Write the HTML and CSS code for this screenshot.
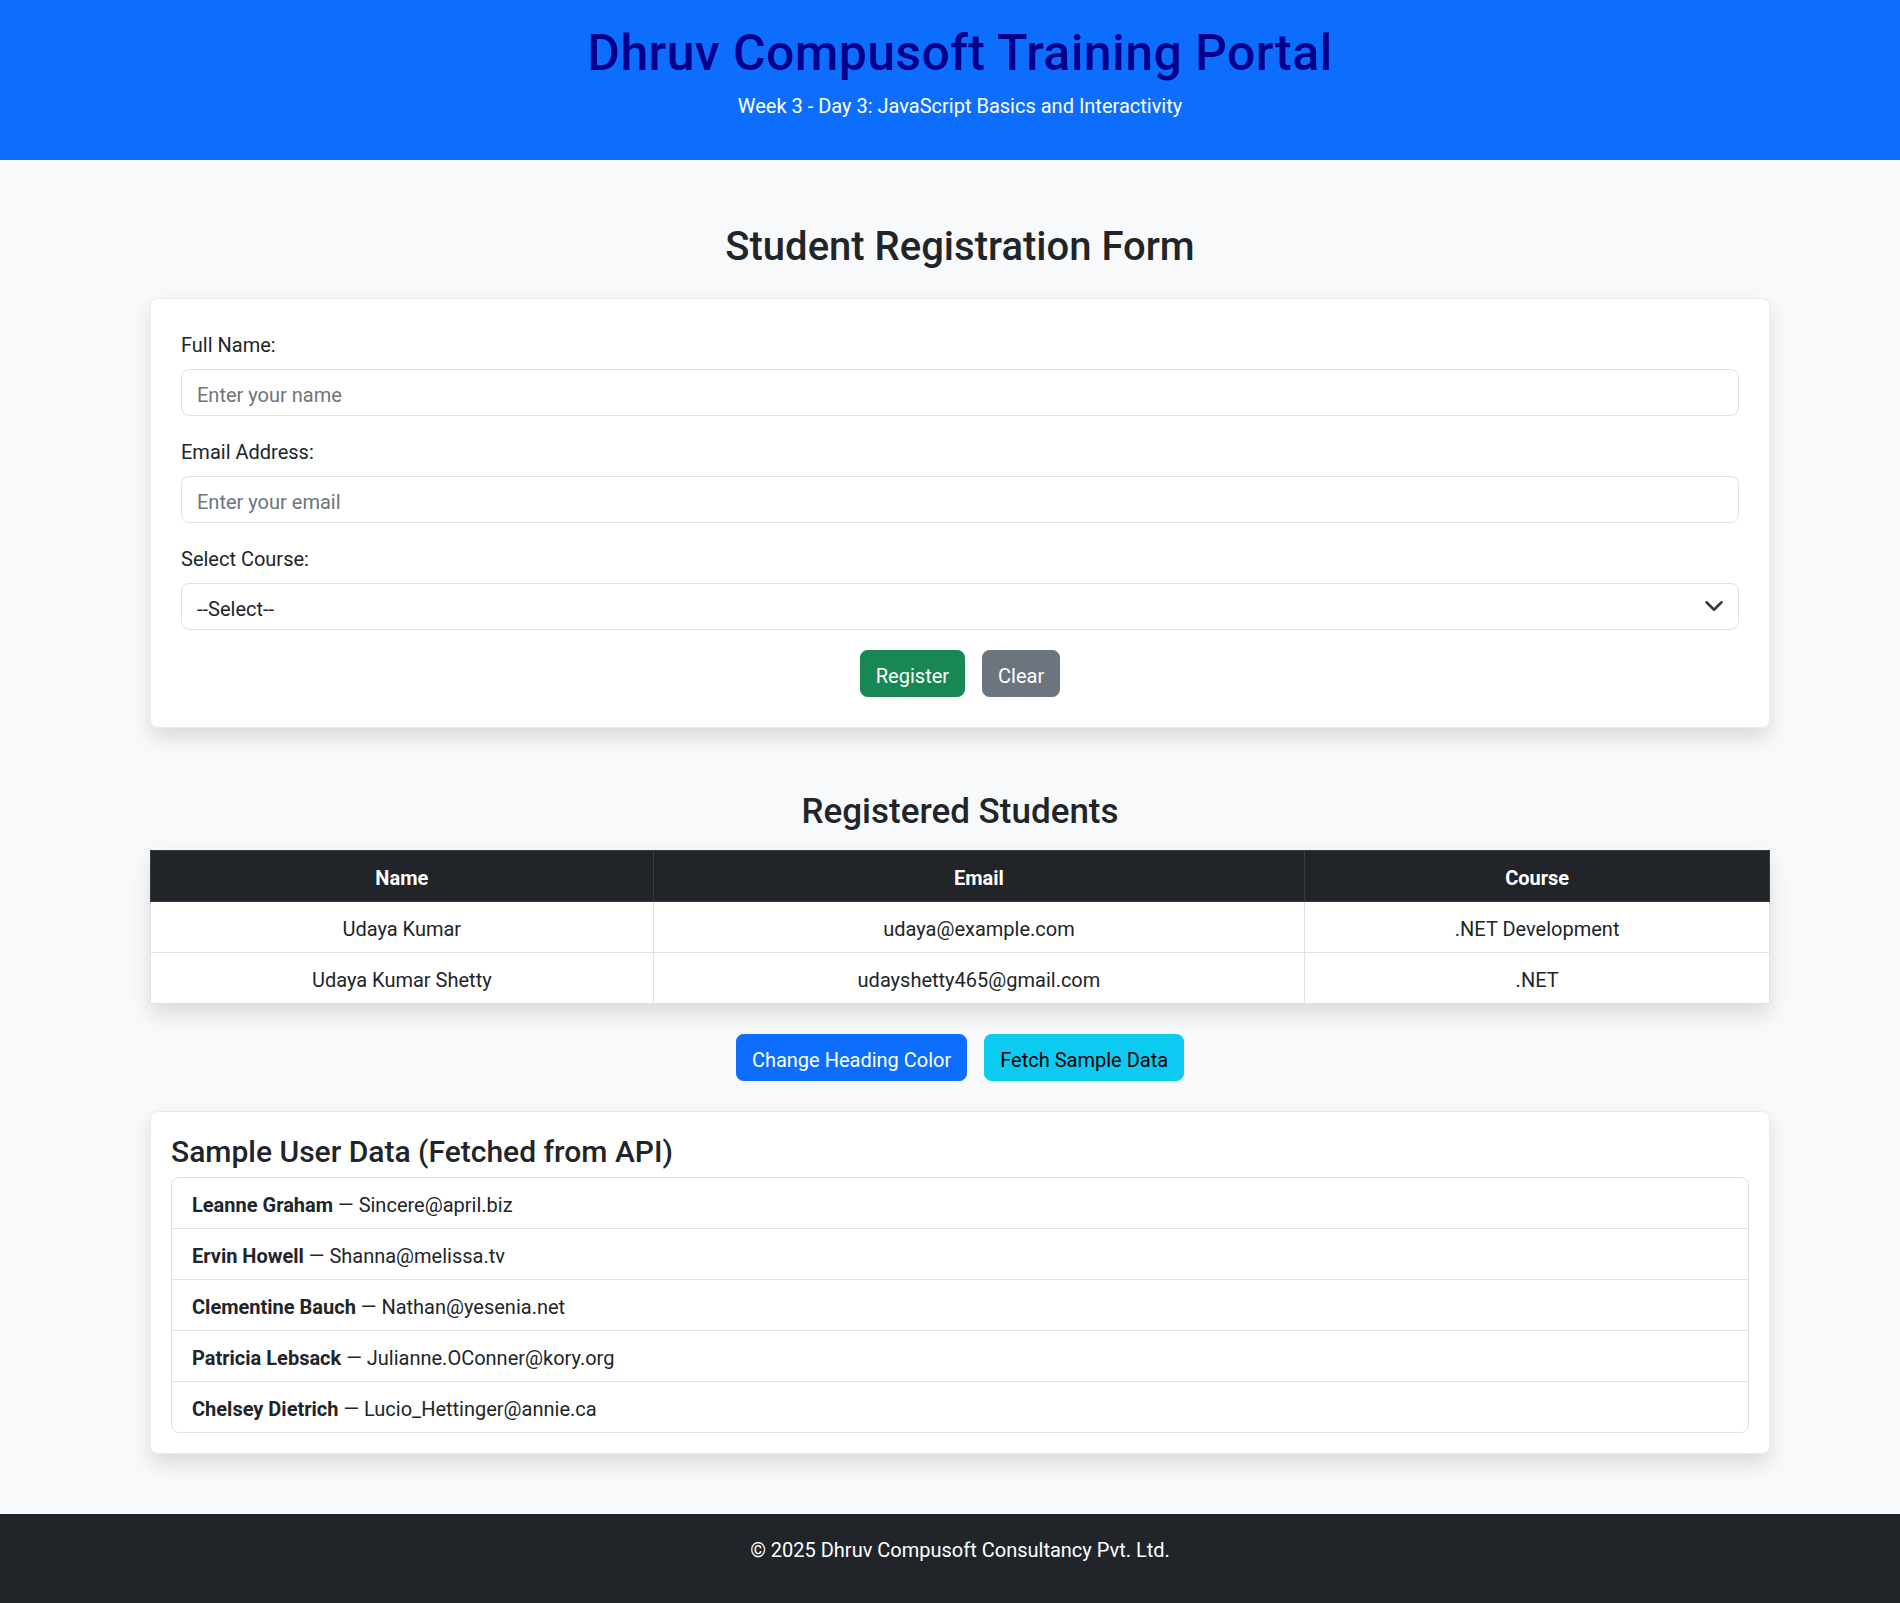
FILE: index.html
```html
<!DOCTYPE html>
<html lang="en">
<head>
<meta charset="utf-8">
<title>Dhruv Compusoft Training Portal</title>
<link rel="stylesheet" href="styles.css">
</head>
<body>
<div class="page">
  <header class="site-header">
    <h1 class="site-title">Dhruv Compusoft Training Portal</h1>
    <p class="site-subtitle">Week 3 - Day 3: JavaScript Basics and Interactivity</p>
  </header>

  <main class="container">
    <h2 class="section-title">Student Registration Form</h2>
    <form class="card form-card">
      <div class="field">
        <label class="field-label" for="name">Full Name:</label>
        <input class="field-control" id="name" type="text" placeholder="Enter your name">
      </div>
      <div class="field">
        <label class="field-label" for="email">Email Address:</label>
        <input class="field-control" id="email" type="email" placeholder="Enter your email">
      </div>
      <div class="field">
        <label class="field-label" for="course">Select Course:</label>
        <div class="select-wrap">
          <select class="field-control field-select" id="course">
            <option>--Select--</option>
            <option>.NET Development</option>
          </select>
          <svg class="select-chevron" viewBox="0 0 16 16" width="20" height="20"><path fill="none" stroke="#343a40" stroke-linecap="round" stroke-linejoin="round" stroke-width="2" d="m2 5 6 6 6-6"/></svg>
        </div>
      </div>
      <div class="btn-row">
        <button type="button" class="btn btn-success">Register</button>
        <button type="button" class="btn btn-secondary">Clear</button>
      </div>
    </form>

    <h3 class="table-title">Registered Students</h3>
    <table class="students">
      <colgroup>
        <col class="col-name"><col class="col-email"><col class="col-course">
      </colgroup>
      <thead>
        <tr><th>Name</th><th>Email</th><th>Course</th></tr>
      </thead>
      <tbody>
        <tr><td>Udaya Kumar</td><td>udaya@example.com</td><td>.NET Development</td></tr>
        <tr><td>Udaya Kumar Shetty</td><td>udayshetty465@gmail.com</td><td>.NET</td></tr>
      </tbody>
    </table>

    <div class="btn-row action-row">
      <button type="button" class="btn btn-primary">Change Heading Color</button>
      <button type="button" class="btn btn-info">Fetch Sample Data</button>
    </div>

    <section class="card api-card">
      <h4 class="api-title">Sample User Data (Fetched from API)</h4>
      <ul class="list-group">
        <li class="list-item"><strong>Leanne Graham</strong> — Sincere@april.biz</li>
        <li class="list-item"><strong>Ervin Howell</strong> — Shanna@melissa.tv</li>
        <li class="list-item"><strong>Clementine Bauch</strong> — Nathan@yesenia.net</li>
        <li class="list-item"><strong>Patricia Lebsack</strong> — Julianne.OConner@kory.org</li>
        <li class="list-item"><strong>Chelsey Dietrich</strong> — Lucio_Hettinger@annie.ca</li>
      </ul>
    </section>
  </main>

  <footer class="site-footer">
    <p class="footer-text">© 2025 Dhruv Compusoft Consultancy Pvt. Ltd.</p>
  </footer>
</div>
</body>
</html>
```
FILE: styles.css
```css
* { box-sizing: border-box; }
html, body { margin: 0; padding: 0; overflow-x: hidden; }
body {
  background: #f8f9fa;
  color: #212529;
  font-family: Roboto, "Noto Sans", "Liberation Sans", sans-serif;
  font-size: 20px;
  line-height: 30px;
}
.page { width: 1920px; }

.site-header {
  background: #0d6efd;
  color: #fff;
  text-align: center;
  padding: 20px 0;
}
.site-title {
  margin: 0 0 10px;
  padding-top: 7px;
  font-size: 50px;
  line-height: 53px;
  font-weight: 500;
  letter-spacing: 0.4px;
  color: #00008b;
}
.site-subtitle {
  margin: 0 0 20px;
  padding-top: 3px;
  font-size: 20px;
  line-height: 27px;
}

.container {
  width: 1650px;
  margin: 60px auto 0;
  padding: 0 15px;
}
.section-title {
  margin: 0 0 30px;
  padding-top: 6px;
  text-align: center;
  font-size: 40px;
  line-height: 42px;
  font-weight: 500;
}
.card {
  background: #fff;
  border: 1px solid #e9ecef;
  border-radius: 8px;
  box-shadow: 0 10px 20px rgba(0, 0, 0, 0.12);
}
.form-card { padding: 30px; }
.field { margin-bottom: 20px; }
.field-label {
  display: block;
  margin-bottom: 10px;
  padding-top: 3px;
  line-height: 27px;
}
.field-control {
  display: block;
  width: 100%;
  height: 47px;
  padding: 9.5px 15px 5.5px;
  font: inherit;
  line-height: 30px;
  color: #212529;
  background: #fff;
  border: 1px solid #dee2e6;
  border-radius: 8px;
  outline: none;
}
.field-control::placeholder { color: #6c757d; }
.select-wrap { position: relative; }
.field-select {
  appearance: none;
  -webkit-appearance: none;
  padding-right: 45px;
}
.select-chevron {
  position: absolute;
  right: 15px;
  top: 13px;
  pointer-events: none;
}

.btn-row {
  display: flex;
  justify-content: center;
  gap: 17px;
}
.btn {
  font: inherit;
  line-height: 30px;
  padding: 9.5px 15px 5.5px;
  border: 1px solid transparent;
  border-radius: 7.5px;
  color: #fff;
  cursor: pointer;
}
.btn-success { background: #198754; border-color: #198754; }
.btn-secondary { background: #6c757d; border-color: #6c757d; }
.btn-primary { background: #0d6efd; border-color: #0d6efd; }
.btn-info { background: #0dcaf0; border-color: #0dcaf0; color: #000; }

.table-title {
  margin: 60px 0 20px;
  padding-top: 5px;
  text-align: center;
  font-size: 35px;
  line-height: 37px;
  font-weight: 500;
}
.students {
  width: 100%;
  border-collapse: collapse;
  background: #fff;
  box-shadow: 0 10px 20px rgba(0, 0, 0, 0.12);
  text-align: center;
}
.col-name { width: 503px; }
.col-email { width: 652px; }
.col-course { width: 465px; }
.students th,
.students td {
  padding: 12px 10px 8px;
  border: 1px solid #dee2e6;
  line-height: 30px;
}
.students th {
  background: #212529;
  color: #fff;
  font-weight: 700;
  border-color: #373b3e;
}
.action-row { margin-top: 30px; }

.api-card {
  margin-top: 30px;
  padding: 20px;
}
.api-title {
  margin: 0 0 9px;
  padding-top: 4px;
  font-size: 30px;
  line-height: 32px;
  font-weight: 500;
}
.list-group {
  list-style: none;
  margin: 0;
  padding: 0;
  border: 1px solid #dee2e6;
  border-radius: 8px;
}
.list-item {
  padding: 12px 20px 8px;
  border-top: 1px solid #dee2e6;
}
.list-item:first-child { border-top: 0; }
.list-item strong { font-weight: 700; }

.site-footer {
  margin-top: 60px;
  background: #212529;
  color: #fff;
  text-align: center;
  padding: 20px 0;
}
.footer-text { margin: 0 0 20px; padding-top: 2px; line-height: 28px; }
```
